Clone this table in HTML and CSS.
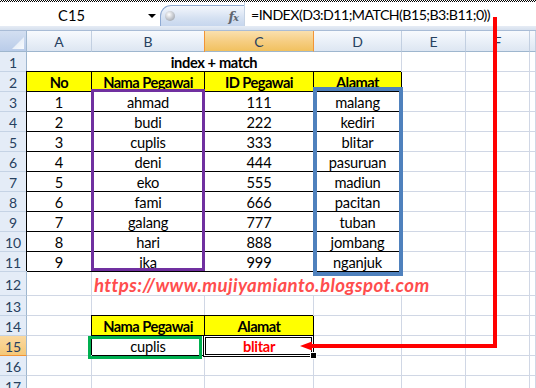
FILE: index.html
```html
<!DOCTYPE html>
<html>
<head>
<meta charset="utf-8">
<link rel="stylesheet" href="styles.css">
</head>
<body>
<div class="page">
  <div class="top">
    <div class="dots"></div>
    <div class="fbar">
      <div class="namebox">C15</div>
      <div class="dd"><span class="tri"></span></div>
      <div class="pill"><span class="knob"></span><span class="fx"><i>f</i><i class="x">x</i></span></div>
      <div class="sep"></div>
      <div class="formula">=INDEX(D3:D11;MATCH(B15;B3:B11;0))</div>
    </div>
    <div class="band"></div>
  </div>

  <div class="sheet">
    <div class="corner"></div><div class="ch">A</div><div class="ch">B</div><div class="ch sel">C</div><div class="ch">D</div><div class="ch">E</div><div class="ch">F</div><div class="ch"></div>

    <div class="rh">1</div><div class="title">index + match</div><div></div><div></div><div></div>

    <div class="rh">2</div><div class="bx hd">No</div><div class="bx hd">Nama Pegawai</div><div class="bx hd">ID Pegawai</div><div class="bx hd">Alamat</div><div></div><div></div><div></div>

    <div class="rh">3</div><div class="bx">1</div><div class="bx">ahmad</div><div class="bx">111</div><div class="bx">malang</div><div></div><div></div><div></div>
    <div class="rh">4</div><div class="bx">2</div><div class="bx">budi</div><div class="bx">222</div><div class="bx">kediri</div><div></div><div></div><div></div>
    <div class="rh">5</div><div class="bx">3</div><div class="bx">cuplis</div><div class="bx">333</div><div class="bx">blitar</div><div></div><div></div><div></div>
    <div class="rh">6</div><div class="bx">4</div><div class="bx">deni</div><div class="bx">444</div><div class="bx">pasuruan</div><div></div><div></div><div></div>
    <div class="rh">7</div><div class="bx">5</div><div class="bx">eko</div><div class="bx">555</div><div class="bx">madiun</div><div></div><div></div><div></div>
    <div class="rh">8</div><div class="bx">6</div><div class="bx">fami</div><div class="bx">666</div><div class="bx">pacitan</div><div></div><div></div><div></div>
    <div class="rh">9</div><div class="bx">7</div><div class="bx">galang</div><div class="bx">777</div><div class="bx">tuban</div><div></div><div></div><div></div>
    <div class="rh">10</div><div class="bx">8</div><div class="bx">hari</div><div class="bx">888</div><div class="bx">jombang</div><div></div><div></div><div></div>
    <div class="rh">11</div><div class="bx">9</div><div class="bx">ika</div><div class="bx">999</div><div class="bx">nganjuk</div><div></div><div></div><div></div>

    <div class="rh">12</div><div></div><div class="url">https://www.mujiyamianto.blogspot.com</div><div></div><div></div>

    <div class="rh">13</div><div></div><div></div><div></div><div></div><div></div><div></div><div></div>

    <div class="rh">14</div><div></div><div class="bx hd">Nama Pegawai</div><div class="bx hd">Alamat</div><div></div><div></div><div></div><div></div>

    <div class="rh rsel">15</div><div></div><div class="bx">cuplis</div><div class="bx result">blitar</div><div></div><div></div><div></div><div></div>

    <div class="rh">16</div><div></div><div></div><div></div><div></div><div></div><div></div><div></div>
    <div class="rh">17</div><div></div><div></div><div></div><div></div><div></div><div></div><div></div>
  </div>

  <div class="box purple"></div>
  <div class="box blue"></div>
  <div class="box green"></div>
  <div class="selbox"></div>
  <div class="handle"></div>

  <svg class="arrow" width="536" height="388" viewBox="0 0 536 388">
    <rect x="493" y="17" width="4" height="331" fill="#FF0000"/>
    <rect x="310" y="344" width="187" height="4" fill="#FF0000"/>
    <polygon points="300,346 312,341.5 312,350.5" fill="#FF0000"/>
  </svg>
</div>
</body>
</html>
```

FILE: styles.css
```css
html, body {
  margin: 0;
  padding: 0;
  background: #fff;
  overflow: hidden;
}

.page {
  position: relative;
  width: 536px;
  height: 388px;
  overflow: hidden;
  font-family: "Lato", "Liberation Sans", sans-serif;
  font-size: 14.67px;
  color: #000;
}

/* ---------- formula bar ---------- */
.top {
  height: 31px;
  display: flex;
  flex-direction: column;
}

.dots {
  height: 2px;
  background: repeating-conic-gradient(#000 0 25%, #fff 0 50%) 0 0 / 2px 2px;
}

.fbar {
  height: 24px;
  display: flex;
  align-items: stretch;
  background: #fff;
}

.namebox {
  width: 143px;
  display: flex;
  align-items: center;
  justify-content: center;
  padding-top: 2px;
  box-sizing: border-box;
}

.dd {
  width: 17px;
  display: flex;
  align-items: center;
  justify-content: center;
  padding-top: 3px;
  box-sizing: border-box;
}

.tri {
  width: 0;
  height: 0;
  border-left: 4px solid transparent;
  border-right: 4px solid transparent;
  border-top: 4px solid #000;
}

.pill {
  width: 84px;
  margin-top: 3px;
  box-sizing: border-box;
  border: 1px solid #8FAAD2;
  border-right: none;
  border-bottom: none;
  border-radius: 11px 0 0 0;
  background: linear-gradient(#F4F7FC, #D5E1F2 60%, #C6D6EE);
  display: flex;
  align-items: center;
  justify-content: space-between;
  padding: 0 6px 0 4px;
}

.knob {
  width: 10px;
  height: 10px;
  border-radius: 50%;
  background: radial-gradient(circle at 40% 35%, #FFFFFF, #B9BDC4 60%, #8E949C);
}

.fx {
  font-family: "DejaVu Serif", "Liberation Serif", serif;
  font-weight: bold;
  font-size: 13px;
  color: #5F6670;
  letter-spacing: -1px;
}

.fx .x {
  font-size: 10px;
}

.sep {
  width: 1px;
  background: #C5D2E3;
}

.formula {
  padding-left: 6px;
  padding-top: 1px;
  display: flex;
  align-items: center;
  white-space: nowrap;
  font-size: 14.2px;
  letter-spacing: -0.55px;
}

.band {
  height: 5px;
  box-sizing: border-box;
  background: linear-gradient(#E6ECF5, #D6E0EE);
  border-bottom: 1px solid #A9BCD6;
}

/* ---------- sheet grid ---------- */
.sheet {
  display: grid;
  grid-template-columns: 27px 65px 113px 109px 88px 64px 64px 6px;
  grid-template-rows: 21px repeat(11, 20px) 24px repeat(5, 20px);
}

.sheet > div {
  box-sizing: border-box;
  border-right: 1px solid #D0D7E5;
  border-bottom: 1px solid #D0D7E5;
  display: flex;
  align-items: center;
  justify-content: center;
  padding-top: 1px;
  white-space: nowrap;
  letter-spacing: -0.2px;
}

.sheet > .corner {
  background: linear-gradient(#D3DFF1, #B9CCE9);
  border-right-color: #9EB6CE;
  border-bottom-color: #9EB6CE;
  position: relative;
}

.corner::after {
  content: "";
  position: absolute;
  right: 2px;
  bottom: 2px;
  width: 12px;
  height: 12px;
  background: linear-gradient(135deg, #DDE7F5, #F7FAFD);
  clip-path: polygon(100% 0, 100% 100%, 0 100%);
}

.sheet > .ch {
  background: linear-gradient(#F8FAFD, #EAF0F8 50%, #DDE6F2);
  border-right-color: #C2CFE1;
  border-bottom-color: #9EB6CE;
  color: #27415F;
  font-size: 14px;
  letter-spacing: 0;
}

.sheet > .ch.sel {
  background: linear-gradient(#FAE0AE, #F6CE83 50%, #F1C15F);
  border-right-color: #F29436;
  box-shadow: -1px 0 0 #F29436;
}

.sheet > .rh {
  background: #E4ECF7;
  border-right-color: #9EB6CE;
  border-bottom-color: #C5D3E5;
  color: #27415F;
  font-size: 14px;
  letter-spacing: 0;
}

.sheet > .rh.rsel {
  background: linear-gradient(#FAD9A0, #F5C878);
  border-bottom-color: #F29436;
}

.sheet > .title {
  grid-column: span 4;
  font-weight: bold;
  letter-spacing: -0.4px;
}

.sheet > .bx {
  border-right-color: #000;
  border-bottom-color: #000;
  box-shadow: -1px -1px 0 #000;
}

.sheet > .hd {
  background: #FFFF00;
  font-weight: bold;
  letter-spacing: -0.55px;
}

.sheet > .result {
  color: #FF0000;
  font-weight: bold;
  letter-spacing: -0.3px;
}

.sheet > .url {
  grid-column: span 4;
  justify-content: flex-start;
  padding-left: 2px;
  padding-top: 2px;
  color: #FF4D4D;
  font-weight: bold;
  font-style: italic;
  font-size: 18.67px;
  letter-spacing: 0.4px;
}

/* ---------- drawn shapes over the sheet ---------- */
.box {
  position: absolute;
  box-sizing: border-box;
}

.purple {
  left: 91px;
  top: 89px;
  width: 114px;
  height: 182px;
  border: 3px solid #7030A0;
}

.blue {
  left: 313px;
  top: 87px;
  width: 90px;
  height: 189px;
  border: 4px solid #4F81BD;
}

.green {
  left: 88px;
  top: 336px;
  width: 114px;
  height: 23px;
  border: 3px solid #00B050;
}

.selbox {
  position: absolute;
  left: 203px;
  top: 335px;
  width: 111px;
  height: 22px;
  box-sizing: border-box;
  border: 1px solid #000;
  box-shadow: inset 0 0 0 1px #fff, inset 0 0 0 2px #000;
}

.handle {
  position: absolute;
  left: 311px;
  top: 353px;
  width: 5px;
  height: 5px;
  background: #000;
  box-shadow: 0 0 0 1px #fff;
}

.arrow {
  position: absolute;
  left: 0;
  top: 0;
  pointer-events: none;
}
```
